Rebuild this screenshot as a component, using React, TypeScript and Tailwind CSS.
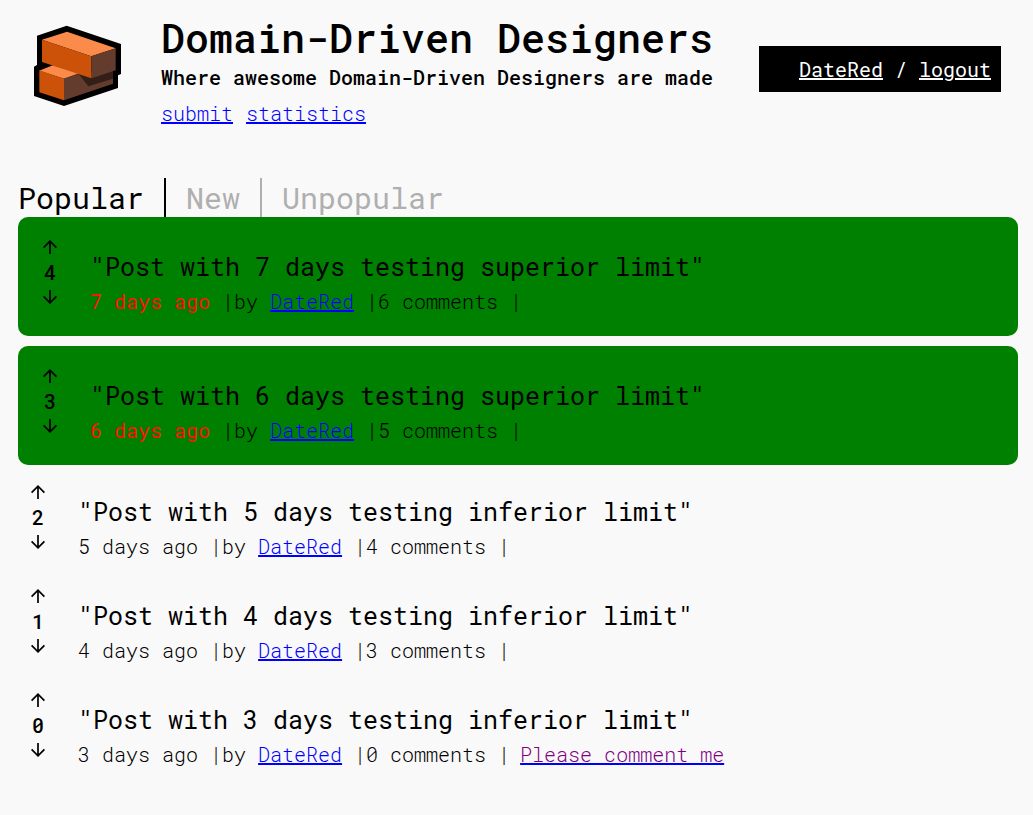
import React from "react";

interface Post {
  id: number;
  title: string;
  votes: number;
  days: number;
  comments: number;
  superior: boolean;
}

const posts: Post[] = [
  { id: 1, title: '"Post with 7 days testing superior limit"', votes: 4, days: 7, comments: 6, superior: true },
  { id: 2, title: '"Post with 6 days testing superior limit"', votes: 3, days: 6, comments: 5, superior: true },
  { id: 3, title: '"Post with 5 days testing inferior limit"', votes: 2, days: 5, comments: 4, superior: false },
  { id: 4, title: '"Post with 4 days testing inferior limit"', votes: 1, days: 4, comments: 3, superior: false },
  { id: 5, title: '"Post with 3 days testing inferior limit"', votes: 0, days: 3, comments: 0, superior: false },
];

const tabs = ["Popular", "New", "Unpopular"];

function Logo() {
  return (
    <svg viewBox="42 45 264 246" className="h-[82px] w-[88px] shrink-0" aria-hidden="true">
      <path d="M140 47 303 102V192L294 196V234L132 288 42 258V170L51 165V77Z" fill="#000" />
      <path d="M58 182 98 166 178 190 132 206Z" fill="#fb8b4b" />
      <path d="M58 181 132 206V271L58 247Z" fill="#cc5209" />
      <path d="M132 206 176 191 279 182V221L132 271Z" fill="#643c2e" />
      <path d="M174 190 215 204 279 182V206L205 229Z" fill="#341f18" />
      <path d="M66 89 141 65 287 115 214 139Z" fill="#fb8b4b" />
      <path d="M66 89 214 139V205L66 156Z" fill="#cc5209" />
      <path d="M214 139 287 115V181L214 205Z" fill="#643c2e" />
    </svg>
  );
}

function VoteButton({ direction }: { direction: "up" | "down" }) {
  return (
    <button type="button" aria-label={`Vote ${direction}`} className="flex h-6 w-full items-center justify-center">
      <svg viewBox="0 0 14 14" className="h-3.5 w-3.5" fill="none" stroke="currentColor" strokeWidth="1.7" aria-hidden="true">
        {direction === "up" ? <path d="M7 14V1.4M.6 7.6 7 1.2l6.4 6.4" /> : <path d="M7 0v12.6M.6 6.4 7 12.8l6.4-6.4" />}
      </svg>
    </button>
  );
}

function PostRow({ post }: { post: Post }) {
  return (
    <li className={post.superior ? "rounded-[10px] bg-[#008000] px-3 pt-[13px] pb-3" : ""}>
      <article className="flex pb-2.5">
        <div className="mr-5 flex w-10 shrink-0 flex-col pt-[5px]">
          <VoteButton direction="up" />
          <span className="text-center font-medium leading-[26px]">{post.votes}</span>
          <VoteButton direction="down" />
        </div>
        <div className="flex min-w-0 flex-col gap-[5px] pt-5">
          <h2 className="text-[25px] font-normal leading-[33px]">{post.title}</h2>
          <p className="font-light leading-[26px]">
            <span className={post.superior ? "font-normal text-[#ff1400]" : ""}>{post.days} days ago</span>
            {" |by "}
            <a href="#user" className="text-[#0000ff] underline decoration-2">DateRed</a>
            {` |${post.comments} comments |`}
            {post.comments === 0 && (
              <a href="#comment" className="ml-2.5 text-[#800080] underline decoration-[#0000ff] decoration-2">Please comment me</a>
            )}
          </p>
        </div>
      </article>
    </li>
  );
}

export default function App() {
  return (
    <div className="min-h-screen bg-[#f9f9f9] pr-[15px] pb-4 pl-[18px] font-['Roboto_Mono','Liberation_Mono',monospace] text-[20px] leading-[26px] text-black">
      <header className="flex items-start pt-3 pr-[17px] pl-4">
        <div className="mt-[13px] mr-[39px] shrink-0">
          <Logo />
        </div>
        <div className="min-w-0 flex-1">
          <h1 className="text-[40px] font-medium leading-[52px]">Domain-Driven Designers</h1>
          <p className="font-medium">Where awesome Domain-Driven Designers are made</p>
          <nav className="mt-2.5 flex gap-[13px] font-light text-[#0000ff]">
            <a href="#submit" className="underline decoration-2">submit</a>
            <a href="#statistics" className="underline decoration-2">statistics</a>
          </nav>
        </div>
        <div className="mt-[34px] shrink-0 bg-black py-2.5 pr-2.5 pl-10 text-white">
          <a href="#user" className="underline decoration-2">DateRed</a>
          {" / "}
          <a href="#logout" className="underline decoration-2">logout</a>
        </div>
      </header>
      <main className="pt-[52px]">
        <nav className="flex text-[30px] leading-[33px]">
          {tabs.map((tab, i) => (
            <a
              key={tab}
              href={`#${tab.toLowerCase()}`}
              className={`pt-[3px] pr-5 pb-[3px] ${i > 0 ? "pl-5 text-[#afafaf]" : "text-black"} ${
                i < tabs.length - 1 ? "border-r-2 border-current" : ""
              }`}
            >
              {tab}
            </a>
          ))}
        </nav>
        <ul className="flex flex-col gap-2.5">
          {posts.map((post) => (
            <PostRow key={post.id} post={post} />
          ))}
        </ul>
      </main>
    </div>
  );
}
